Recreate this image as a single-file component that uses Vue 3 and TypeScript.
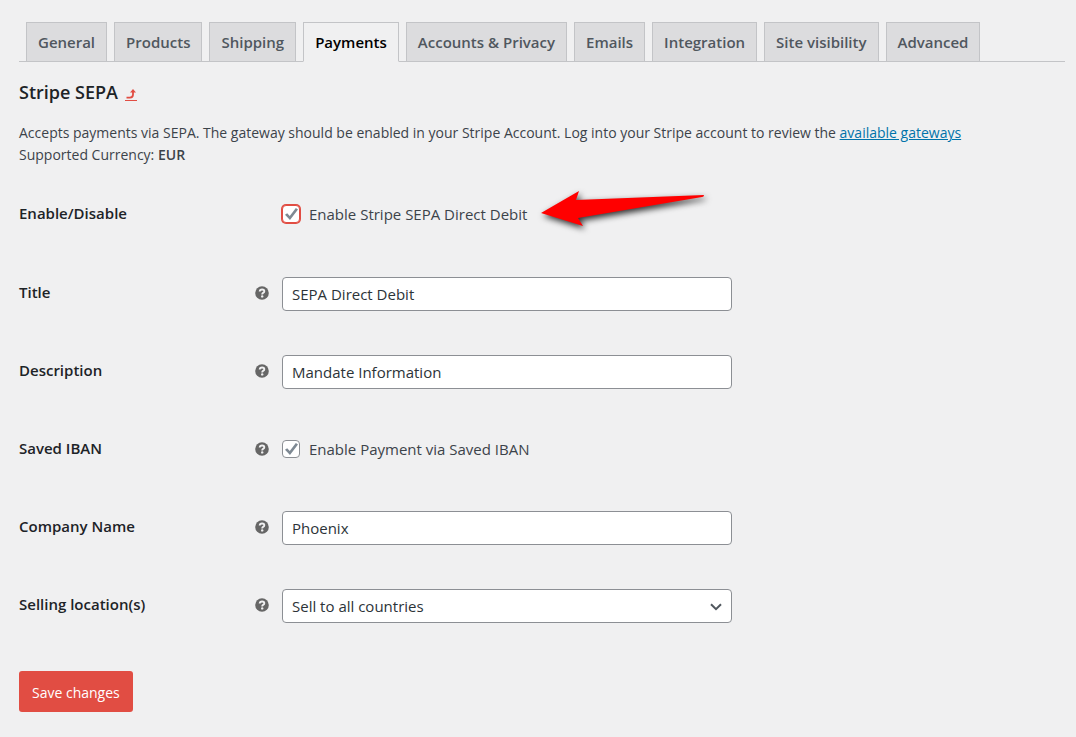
<script setup lang="ts">
import { ref } from 'vue'

interface Field {
  id: string
  label: string
  kind: 'check' | 'text' | 'select'
  help: boolean
  text: string
}

const tabs: string[] = [
  'General', 'Products', 'Shipping', 'Payments', 'Accounts & Privacy',
  'Emails', 'Integration', 'Site visibility', 'Advanced',
]
const activeTab = ref('Payments')

const fields = ref<Field[]>([
  { id: 'enabled', label: 'Enable/Disable', kind: 'check', help: false, text: 'Enable Stripe SEPA Direct Debit' },
  { id: 'title', label: 'Title', kind: 'text', help: true, text: 'SEPA Direct Debit' },
  { id: 'description', label: 'Description', kind: 'text', help: true, text: 'Mandate Information' },
  { id: 'saved-iban', label: 'Saved IBAN', kind: 'check', help: true, text: 'Enable Payment via Saved IBAN' },
  { id: 'company', label: 'Company Name', kind: 'text', help: true, text: 'Phoenix' },
  { id: 'locations', label: 'Selling location(s)', kind: 'select', help: true, text: 'Sell to all countries' },
])
const checks = ref<Record<string, boolean>>({ enabled: true, 'saved-iban': true })
</script>

<template>
  <main class="settings">
    <nav class="tabs">
      <a
        v-for="tab in tabs"
        :key="tab"
        href="#"
        class="tab"
        :class="{ active: tab === activeTab }"
        @click.prevent="activeTab = tab"
      >{{ tab }}</a>
    </nav>

    <h2 class="heading">
      Stripe SEPA
      <a href="#" class="back" aria-label="Return to payments">
        <svg viewBox="0 0 12 12" width="12" height="12" aria-hidden="true">
          <path d="M1.5 8.6H5Q8 8.6 8 5.6V2.5" fill="none" stroke="#e14d43" stroke-width="1.8" />
          <path d="M5 3.6L8 0L11 3.6Z" fill="#e14d43" />
          <path d="M0 11.5H12" stroke="#e14d43" />
        </svg>
      </a>
    </h2>

    <p class="intro">
      Accepts payments via SEPA. The gateway should be enabled in your Stripe Account. Log into your Stripe account to review the <a href="#">available gateways</a><br>
      Supported Currency: <strong>EUR</strong>
    </p>

    <form @submit.prevent>
      <div v-for="field in fields" :key="field.id" class="row">
        <label class="name" :for="field.id">{{ field.label }}</label>
        <span class="help">
          <svg v-if="field.help" viewBox="0 0 14 14" width="14" height="14" role="img" aria-label="Help">
            <circle cx="7" cy="7" r="6.8" fill="#666" />
            <path d="M4.7 5.5Q4.8 3.5 7.1 3.5Q9.3 3.5 9.3 5.3Q9.3 6.3 8.1 6.9Q7.2 7.4 7.2 8.5" fill="none" stroke="#f0f0f1" stroke-width="1.9" />
            <circle cx="7.2" cy="10.4" r="1.2" fill="#f0f0f1" />
          </svg>
        </span>

        <div v-if="field.kind === 'check'" class="control">
          <label class="option">
            <input :id="field.id" v-model="checks[field.id]" type="checkbox" class="box">
            <svg class="tick" viewBox="0 0 12 11" width="13" height="12" aria-hidden="true">
              <path d="M0 6.2L2 4.7L4.4 7.3L10 0L12 1.3L4.6 11Z" fill="#7e8993" />
            </svg>
            {{ field.text }}
          </label>
          <svg v-if="field.id === 'enabled'" class="arrow" viewBox="0 0 176 50" width="176" height="50" aria-hidden="true">
            <path d="M5 23L43 1L40 10L168 5Q168 7 166 7L42 28L47 36Z" fill="#f00" />
          </svg>
        </div>
        <input v-else-if="field.kind === 'text'" :id="field.id" v-model="field.text" type="text" class="input">
        <div v-else class="select-wrap">
          <select :id="field.id" class="input">
            <option>{{ field.text }}</option>
          </select>
          <svg class="chevron" viewBox="0 0 12 8" width="12" height="8" aria-hidden="true">
            <path d="M1 1.2L6 6.2L11 1.2" fill="none" stroke="#50575e" stroke-width="2" />
          </svg>
        </div>
      </div>
      <button type="submit" class="save">Save changes</button>
    </form>
  </main>
</template>

<style>
html {
  background: #f0f0f1;
}
</style>

<style scoped>
.settings {
  box-sizing: border-box;
  padding: 22px 11px 25px 19px;
  font-family: "Open Sans", "Noto Sans", sans-serif;
  font-size: 14px;
  color: #3c434a;
}
.tabs {
  display: flex;
  gap: 7px;
  padding-left: 7px;
  border-bottom: 1px solid #c3c4c7;
}
.tab {
  box-sizing: border-box;
  height: 40px;
  margin-bottom: -1px;
  padding: 0 11px;
  border: 1px solid #c3c4c7;
  background: #dcdcde;
  color: #50575e;
  font-size: 15px;
  font-weight: 600;
  line-height: 38px;
  text-decoration: none;
  white-space: nowrap;
}
.tab.active {
  border-bottom-color: #f0f0f1;
  background: #f0f0f1;
  color: #000;
}
.heading {
  display: flex;
  align-items: center;
  gap: 7px;
  margin: 17px 0;
  color: #1d2327;
  font-size: 18px;
  font-weight: 600;
  line-height: 26px;
}
.back {
  display: flex;
  padding-top: 5px;
}
.intro {
  margin: 0 0 9px;
  line-height: 22px;
}
.intro a {
  color: #0073aa;
}
.intro strong {
  font-weight: 600;
}
.row {
  display: grid;
  grid-template-columns: 236px 27px minmax(0, 450px);
  align-items: center;
  height: 78px;
}
.row:first-child {
  height: 80px;
}
.name {
  padding-bottom: 4px;
  color: #1d2327;
  font-size: 15px;
  font-weight: 600;
}
.help {
  display: flex;
  padding-bottom: 2px;
}
.control {
  display: flex;
  align-items: center;
  position: relative;
  padding-bottom: 2px;
  font-size: 15px;
}
.option {
  display: flex;
  align-items: center;
  position: relative;
  gap: 9px;
  white-space: nowrap;
}
.box {
  appearance: none;
  box-sizing: border-box;
  width: 18px;
  height: 18px;
  margin: 0;
  border: 1px solid #8c8f94;
  border-radius: 4px;
  background: #fff;
}
#enabled {
  border-color: #e14d43;
  box-shadow: 0 0 0 1px #e14d43;
}
.tick {
  position: absolute;
  left: 3px;
  pointer-events: none;
  visibility: hidden;
}
.box:checked + .tick {
  visibility: visible;
}
.arrow {
  position: absolute;
  left: 254px;
  top: -14px;
  overflow: visible;
  filter: drop-shadow(2px 3px 3px rgba(0, 0, 0, 0.8));
}
.input {
  appearance: none;
  box-sizing: border-box;
  width: 100%;
  height: 34px;
  padding: 0 9px;
  border: 1px solid #8c8f94;
  border-radius: 4px;
  background: #fff;
  color: #2c3338;
  font-family: inherit;
  font-size: 15px;
}
.select-wrap {
  position: relative;
}
.chevron {
  position: absolute;
  right: 10px;
  top: 14px;
  pointer-events: none;
}
.save {
  margin-top: 26px;
  height: 41px;
  padding: 2px 13px 0;
  border: 0;
  border-radius: 3px;
  background: #e14d43;
  color: #fff;
  font-family: inherit;
  font-size: 14px;
}
</style>
